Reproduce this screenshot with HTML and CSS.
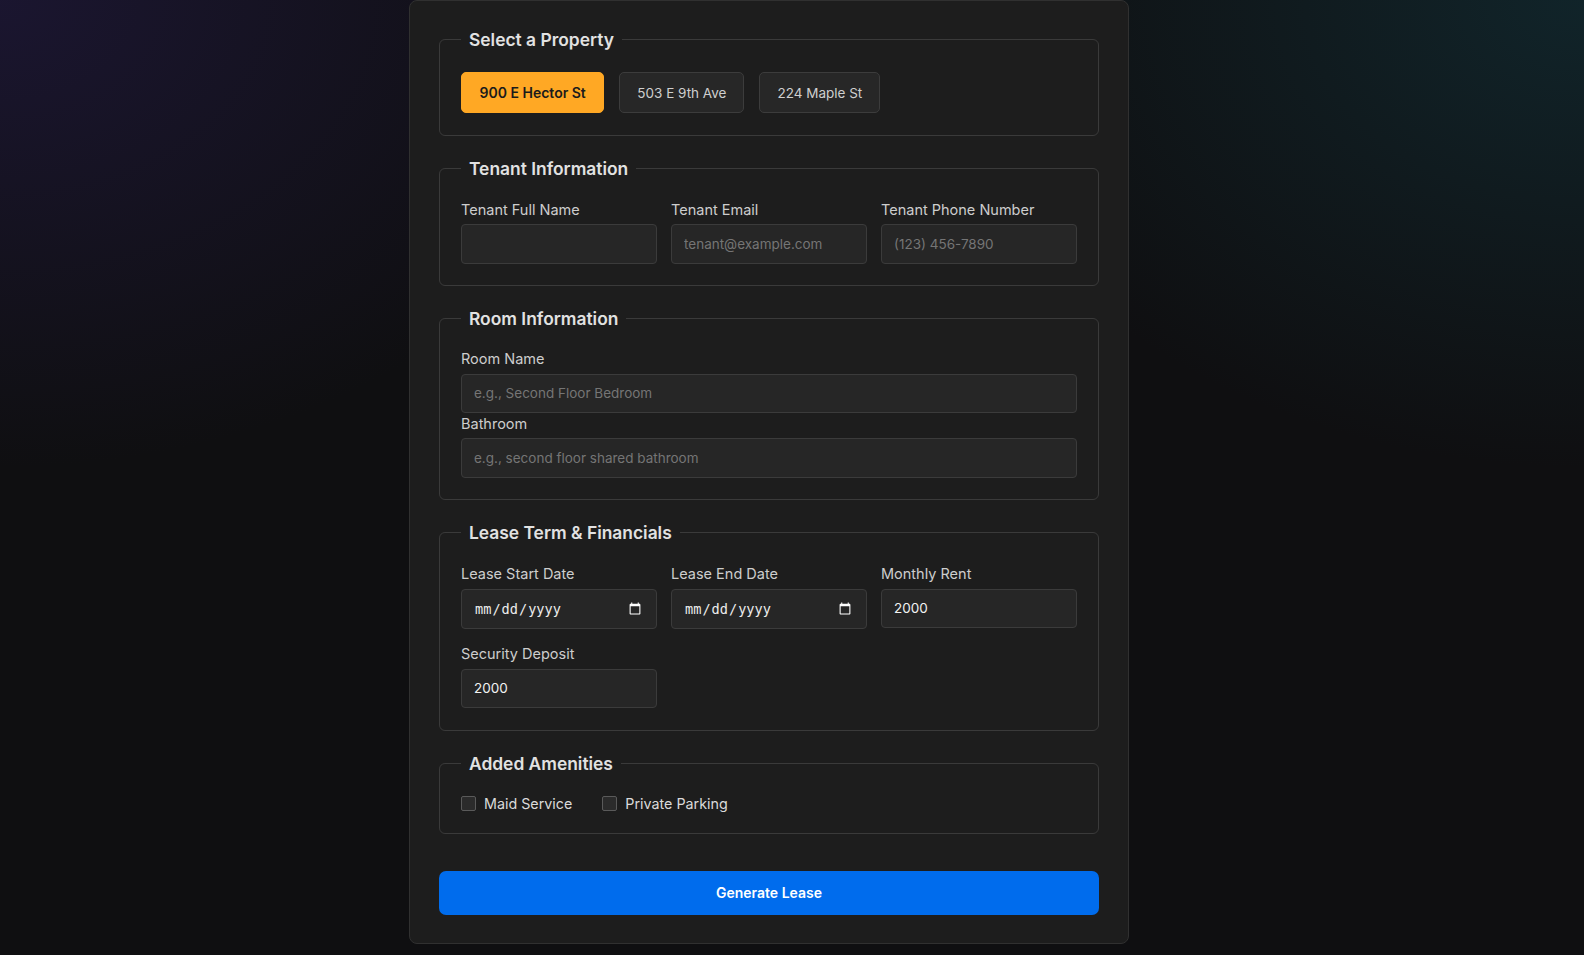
FILE: index.html
```html
<!DOCTYPE html>
<html lang="en">
<head>
<meta charset="utf-8">
<title>Generate Lease</title>
<link rel="stylesheet" href="styles.css">
</head>
<body>
<main class="card">
  <form class="lease-form">
    <fieldset class="section">
      <legend>Select a Property</legend>
      <div class="property-list">
        <button type="button" class="prop-btn active">900 E Hector St</button>
        <button type="button" class="prop-btn">503 E 9th Ave</button>
        <button type="button" class="prop-btn">224 Maple St</button>
      </div>
    </fieldset>

    <fieldset class="section">
      <legend>Tenant Information</legend>
      <div class="grid3">
        <div class="field">
          <label>Tenant Full Name</label>
          <input type="text" class="input">
        </div>
        <div class="field">
          <label>Tenant Email</label>
          <input type="email" class="input" placeholder="tenant@example.com">
        </div>
        <div class="field">
          <label>Tenant Phone Number</label>
          <input type="tel" class="input" placeholder="(123) 456-7890">
        </div>
      </div>
    </fieldset>

    <fieldset class="section">
      <legend>Room Information</legend>
      <div class="stack">
        <div class="field">
          <label>Room Name</label>
          <input type="text" class="input" placeholder="e.g., Second Floor Bedroom">
        </div>
        <div class="field">
          <label>Bathroom</label>
          <input type="text" class="input" placeholder="e.g., second floor shared bathroom">
        </div>
      </div>
    </fieldset>

    <fieldset class="section">
      <legend>Lease Term &amp; Financials</legend>
      <div class="grid3 rows">
        <div class="field">
          <label>Lease Start Date</label>
          <input type="date" class="input date">
        </div>
        <div class="field">
          <label>Lease End Date</label>
          <input type="date" class="input date">
        </div>
        <div class="field">
          <label>Monthly Rent</label>
          <input type="number" class="input" value="2000">
        </div>
        <div class="field">
          <label>Security Deposit</label>
          <input type="number" class="input" value="2000">
        </div>
      </div>
    </fieldset>

    <fieldset class="section">
      <legend>Added Amenities</legend>
      <div class="amenities">
        <label class="check"><input type="checkbox" class="box"><span>Maid Service</span></label>
        <label class="check"><input type="checkbox" class="box"><span>Private Parking</span></label>
      </div>
    </fieldset>

    <button type="button" class="submit">Generate Lease</button>
  </form>
</main>
</body>
</html>
```

FILE: styles.css
```css
* { box-sizing: border-box; }

html, body {
  margin: 0;
  height: 100%;
}

body {
  font-family: Inter, "Noto Sans", sans-serif;
  color: #e4e4e4;
  background-color: #0f0f11;
  background-image:
    radial-gradient(ellipse 900px 650px at 0% 0%, rgba(38, 28, 78, 0.5), rgba(38, 28, 78, 0) 72%),
    radial-gradient(ellipse 900px 650px at 100% 0%, rgba(18, 50, 58, 0.6), rgba(18, 50, 58, 0) 72%);
  background-repeat: no-repeat;
  overflow: hidden;
}

.card {
  width: 720px;
  margin: 0 0 0 409px;
  padding: 28px 29px;
  background: #1d1d1d;
  border: 1px solid #303030;
  border-radius: 8px;
}

.lease-form {
  display: flex;
  flex-direction: column;
}

.section {
  margin: 0 0 22px 0;
  padding: 21px 21px 21.5px;
  border: 1px solid #3a3a3a;
  border-radius: 6px;
  min-width: 0;
}

.section legend {
  padding: 0 8px;
  margin-left: 0;
  font-size: 17.4px;
  font-weight: 600;
  line-height: 21px;
  color: #e2e2e2;
}

.property-list {
  display: flex;
  gap: 15px;
  margin-top: 1px;
}

.prop-btn {
  height: 41px;
  padding: 0 17px;
  font-family: Inter, "Noto Sans", sans-serif;
  font-size: 13.5px;
  color: #cfcfcf;
  background: #272727;
  border: 1px solid #3c3c3c;
  border-radius: 5px;
}

.prop-btn.active {
  padding: 0 17.5px;
  font-size: 14px;
  background: #ffa824;
  border-color: #ffa824;
  color: #1b1b1b;
  font-weight: 600;
}

.grid3 {
  display: grid;
  grid-template-columns: repeat(3, 1fr);
  column-gap: 14px;
  margin-top: 1px;
}

.grid3.rows {
  row-gap: 16.5px;
}

.stack {
  display: flex;
  flex-direction: column;
  gap: 1.5px;
}

.field {
  display: flex;
  flex-direction: column;
}

.field label {
  font-size: 14.5px;
  line-height: 17px;
  margin-bottom: 6.5px;
  color: #cdcdcd;
}

.input {
  width: 100%;
  height: 39.5px;
  padding: 0 12px;
  font-family: Inter, "Noto Sans", sans-serif;
  font-size: 13.5px;
  color: #f2f2f2;
  background: #262626;
  border: 1px solid #3b3b3b;
  border-radius: 4px;
  color-scheme: dark;
  outline: none;
}

.input::placeholder {
  color: #757575;
}

.input.date {
  height: 40px;
  font-family: "DejaVu Sans Mono", monospace;
  font-size: 13.6px;
  color: #ededed;
}

.input[type="number"]::-webkit-inner-spin-button,
.input[type="number"]::-webkit-outer-spin-button {
  -webkit-appearance: none;
  margin: 0;
}

.amenities {
  display: flex;
  gap: 30px;
}

.check {
  display: flex;
  align-items: center;
  gap: 8px;
  font-size: 14.3px;
  line-height: 17px;
  color: #dadada;
}

.box {
  -webkit-appearance: none;
  appearance: none;
  width: 15px;
  height: 15px;
  margin: 0;
  background: #2b2b2b;
  border: 1px solid #5a5a5a;
  border-radius: 2px;
}

.submit {
  margin-top: 14.5px;
  height: 44.5px;
  font-family: Inter, "Noto Sans", sans-serif;
  font-size: 14px;
  font-weight: 600;
  color: #ffffff;
  background: #006ced;
  border: none;
  border-radius: 7px;
}
```
